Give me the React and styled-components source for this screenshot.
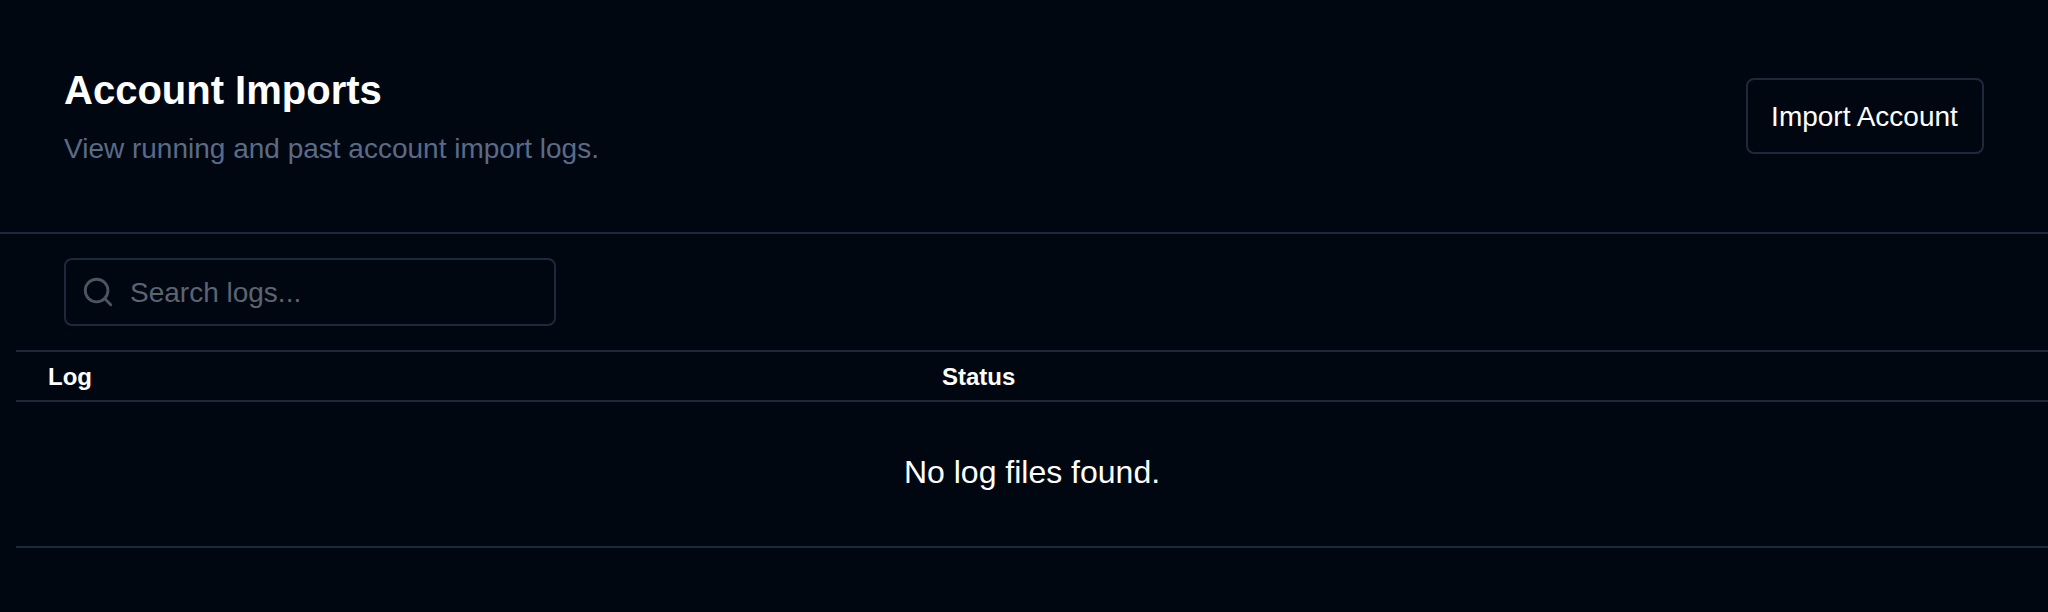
import React from "react";
import styled, { createGlobalStyle } from "styled-components";
import { Search } from "lucide-react";

const GlobalStyle = createGlobalStyle`
  html, body {
    margin: 0;
    background: #010711;
    font-family: "Liberation Sans", Arial, sans-serif;
    color: #ffffff;
  }
`;

const Page = styled.div`
  min-height: 612px;
  background: #010711;
`;

const Header = styled.header`
  display: flex;
  align-items: center;
  justify-content: space-between;
  height: 234px;
  padding: 0 64px;
  box-sizing: border-box;
  border-bottom: 2px solid #1e293b;
`;

const Heading = styled.div`
  padding-top: 3px;
`;

const Title = styled.h1`
  margin: 0;
  font-size: 40px;
  line-height: 52px;
  font-weight: 700;
`;

const Subtitle = styled.p`
  margin: 10px 0 0;
  font-size: 28px;
  line-height: 46px;
  color: #5a6b88;
`;

const Button = styled.button`
  width: 238px;
  height: 76px;
  padding: 2px 1px 0 0;
  background: transparent;
  border: 2px solid #1e293b;
  border-radius: 8px;
  color: #ffffff;
  font: inherit;
  font-size: 28px;
`;

const Toolbar = styled.div`
  padding: 24px 64px;
`;

const SearchBox = styled.div`
  display: flex;
  align-items: center;
  gap: 15px;
  width: 492px;
  height: 68px;
  padding: 0 15px;
  box-sizing: border-box;
  border: 2px solid #1e293b;
  border-radius: 8px;
  color: #4b5563;
  font-size: 28px;
`;

const Placeholder = styled.span`
  padding-top: 2px;
  color: #5b6472;
`;

const Table = styled.div`
  margin-left: 16px;
`;

const HeadRow = styled.div`
  display: grid;
  grid-template-columns: 894px 1fr;
  align-items: center;
  height: 52px;
  padding-top: 1px;
  border-top: 2px solid #1e293b;
  border-bottom: 2px solid #1e293b;
  box-sizing: border-box;
  font-size: 24px;
  font-weight: 700;
`;

const HeadCell = styled.div`
  padding-left: 32px;
`;

const EmptyRow = styled.div`
  display: flex;
  align-items: center;
  justify-content: center;
  height: 146px;
  padding-bottom: 4px;
  box-sizing: border-box;
  border-bottom: 2px solid #1e293b;
  font-size: 32px;
`;

export default function App() {
  return (
    <Page>
      <GlobalStyle />
      <Header>
        <Heading>
          <Title>Account Imports</Title>
          <Subtitle>View running and past account import logs.</Subtitle>
        </Heading>
        <Button>Import Account</Button>
      </Header>
      <Toolbar>
        <SearchBox>
          <Search size={34} strokeWidth={2} />
          <Placeholder>Search logs...</Placeholder>
        </SearchBox>
      </Toolbar>
      <Table>
        <HeadRow>
          <HeadCell>Log</HeadCell>
          <HeadCell>Status</HeadCell>
        </HeadRow>
        <EmptyRow>No log files found.</EmptyRow>
      </Table>
    </Page>
  );
}
